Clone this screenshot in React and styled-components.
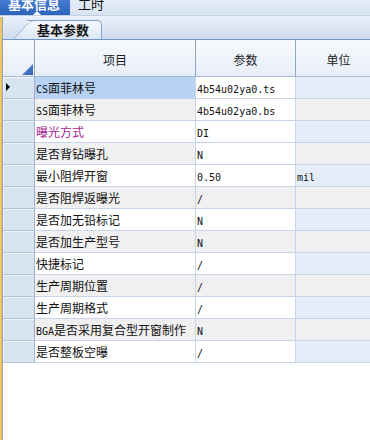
import React from 'react';
import styled, { createGlobalStyle } from 'styled-components';

const GlobalStyle = createGlobalStyle`
  html, body { margin: 0; padding: 0; background: #fff; overflow: hidden; }
  #root { width: 370px; height: 440px; }
`;

const CJK = `"Noto Sans CJK SC", "Noto Sans", sans-serif`;
const MONO = `"DejaVu Sans Mono", "Liberation Mono", monospace`;

const Page = styled.div`
  width: 370px;
  height: 440px;
  display: flex;
  flex-direction: column;
  overflow: hidden;
  background: #fff;
  font-family: ${CJK};
`;

const TopBar = styled.div`
  flex: none;
  height: 15px;
  display: flex;
  align-items: flex-end;
  background: linear-gradient(#e3ebf6, #d8e3f1);
  border-bottom: 1px solid #c2d0e4;
`;

const TopTab = styled.div`
  position: relative;
  height: 20px;
  line-height: 18px;
  box-sizing: border-box;
  width: ${(p) => p.$w}px;
  padding-left: ${(p) => p.$pl}px;
  font-size: 13px;
  font-weight: ${(p) => (p.$active ? 'bold' : 'normal')};
  color: ${(p) => (p.$active ? '#fff' : '#111')};
  background: ${(p) => (p.$active ? 'linear-gradient(#4c84d8, #2c63bb)' : 'transparent')};
  white-space: nowrap;
  &::after {
    content: '';
    display: ${(p) => (p.$active ? 'block' : 'none')};
    position: absolute;
    left: 33px;
    bottom: 0;
    border-left: 4px solid transparent;
    border-right: 4px solid transparent;
    border-bottom: 4px solid #fff;
  }
`;

const Body = styled.div`
  flex: 1;
  display: flex;
  min-height: 0;
  border-top: 1px solid #eef3fa;
`;

const LeftStrip = styled.div`
  flex: none;
  width: 2px;
  background: linear-gradient(to right, #f6d37c, #e8b040);
  border-right: 1px solid #9aa8ba;
`;

const Main = styled.div`
  flex: 1;
  min-width: 0;
  display: flex;
  flex-direction: column;
  overflow: hidden;
`;

const SubStrip = styled.div`
  flex: none;
  height: 22px;
  display: flex;
  align-items: flex-end;
  background: linear-gradient(#e8eff9, #cfdcef);
  border-bottom: 1px solid #7394c6;
`;

const SubTab = styled.div`
  position: relative;
  margin-left: 24px;
  width: 75px;
  height: 19px;
  box-sizing: border-box;
  border: 1px solid #86a2c9;
  border-left: none;
  border-bottom: none;
  border-radius: 0 5px 0 0;
  background: linear-gradient(#f4f8fd, #dce7f5);
  &::before {
    content: '';
    position: absolute;
    left: -14px;
    top: -1px;
    bottom: 0;
    width: 22px;
    box-sizing: border-box;
    border-left: 1px solid #86a2c9;
    border-top: 1px solid #86a2c9;
    border-top-left-radius: 6px;
    background: linear-gradient(#f4f8fd, #dce7f5);
    transform: skewX(-42deg);
    transform-origin: bottom left;
  }
`;

const SubTabLabel = styled.span`
  position: relative;
  display: block;
  padding-left: 10px;
  line-height: 18px;
  font-size: 13px;
  font-weight: bold;
  color: #151515;
  white-space: nowrap;
`;

const COLS = '32px 161px 100px 86px';

const HeaderRow = styled.div`
  flex: none;
  display: grid;
  grid-template-columns: ${COLS};
  height: 37px;
  box-sizing: border-box;
  border-bottom: 1px solid #a9bbd4;
`;

const HeaderCell = styled.div`
  position: relative;
  display: flex;
  align-items: center;
  justify-content: center;
  box-sizing: border-box;
  border-right: 1px solid #8fa5c1;
  background: linear-gradient(#f6f9fd, #e8eef8);
  font-size: 12px;
  color: #1c1c1c;
  padding-top: 2px;
`;

const CornerMark = styled.svg`
  position: absolute;
  right: 1px;
  bottom: 1px;
`;

const Row = styled.div`
  flex: none;
  display: grid;
  grid-template-columns: ${COLS};
  height: 22px;
`;

const RowHeader = styled.div`
  position: relative;
  box-sizing: border-box;
  background: #d9e4f3;
  border-right: 1px solid #9db1ca;
  border-bottom: 1px solid #b4c5dc;
  box-shadow: inset 1px 1px 0 #eef3fa;
`;

const Indicator = styled.svg`
  position: absolute;
  left: 3px;
  top: 6px;
`;

const Cell = styled.div`
  box-sizing: border-box;
  background: ${(p) => p.$bg};
  border-right: 1px solid #c6d5ea;
  border-bottom: 1px solid #c6d5ea;
  padding-left: 1px;
  font-size: 12px;
  line-height: 21px;
  color: ${(p) => p.$color || '#111'};
  white-space: nowrap;
  overflow: hidden;
`;

const Latin = styled.span`
  font-family: ${MONO};
  font-size: 10px;
  color: #111;
`;

const rows = [
  { latin: 'CS', name: '面菲林号', value: '4b54u02ya0.ts' },
  { latin: 'SS', name: '面菲林号', value: '4b54u02ya0.bs' },
  { name: '曝光方式', value: 'DI', color: '#a6238f' },
  { name: '是否背钻曝孔', value: 'N' },
  { name: '最小阻焊开窗', value: '0.50', unit: 'mil' },
  { name: '是否阻焊返曝光', value: '/' },
  { name: '是否加无铅标记', value: 'N' },
  { name: '是否加生产型号', value: 'N' },
  { name: '快捷标记', value: '/' },
  { name: '生产周期位置', value: '/' },
  { name: '生产周期格式', value: '/' },
  { latin: 'BGA', name: '是否采用复合型开窗制作', value: 'N' },
  { name: '是否整板空曝', value: '/' },
];

const GRAY = '#f0f0f0';
const WHITE = '#ffffff';
const BLUE = '#e5edf9';
const SEL = '#b7d2f2';

export default function App() {
  return (
    <Page>
      <GlobalStyle />
      <TopBar>
        <TopTab $active $w={70} $pl={8}>基本信息</TopTab>
        <TopTab $w={40} $pl={8}>工时</TopTab>
      </TopBar>
      <Body>
        <LeftStrip />
        <Main>
          <SubStrip>
            <SubTab>
              <SubTabLabel>基本参数</SubTabLabel>
            </SubTab>
          </SubStrip>
          <HeaderRow>
            <HeaderCell>
              <CornerMark width="11" height="11" viewBox="0 0 11 11">
                <defs>
                  <linearGradient id="cm" x1="0" y1="0" x2="1" y2="1">
                    <stop offset="0" stopColor="#6b98dc" />
                    <stop offset="1" stopColor="#2a5cb5" />
                  </linearGradient>
                </defs>
                <polygon points="11,0 11,11 0,11" fill="url(#cm)" />
              </CornerMark>
            </HeaderCell>
            <HeaderCell>项目</HeaderCell>
            <HeaderCell>参数</HeaderCell>
            <HeaderCell>单位</HeaderCell>
          </HeaderRow>
          {rows.map((r, i) => {
            const odd = i % 2 === 1;
            const nameBg = i === 0 ? SEL : odd ? GRAY : WHITE;
            const valBg = odd && i > 3 ? GRAY : WHITE;
            const unitBg = odd ? GRAY : BLUE;
            return (
              <Row key={i}>
                <RowHeader>
                  {i === 0 && (
                    <Indicator width="5" height="8" viewBox="0 0 5 8">
                      <polygon points="0,0 4,4 0,8" fill="#000" />
                    </Indicator>
                  )}
                </RowHeader>
                <Cell $bg={nameBg} $color={r.color}>
                  {r.latin && <Latin>{r.latin}</Latin>}
                  {r.name}
                </Cell>
                <Cell $bg={valBg}>
                  <Latin>{r.value}</Latin>
                </Cell>
                <Cell $bg={unitBg}>
                  {r.unit && <Latin>{r.unit}</Latin>}
                </Cell>
              </Row>
            );
          })}
        </Main>
      </Body>
    </Page>
  );
}
